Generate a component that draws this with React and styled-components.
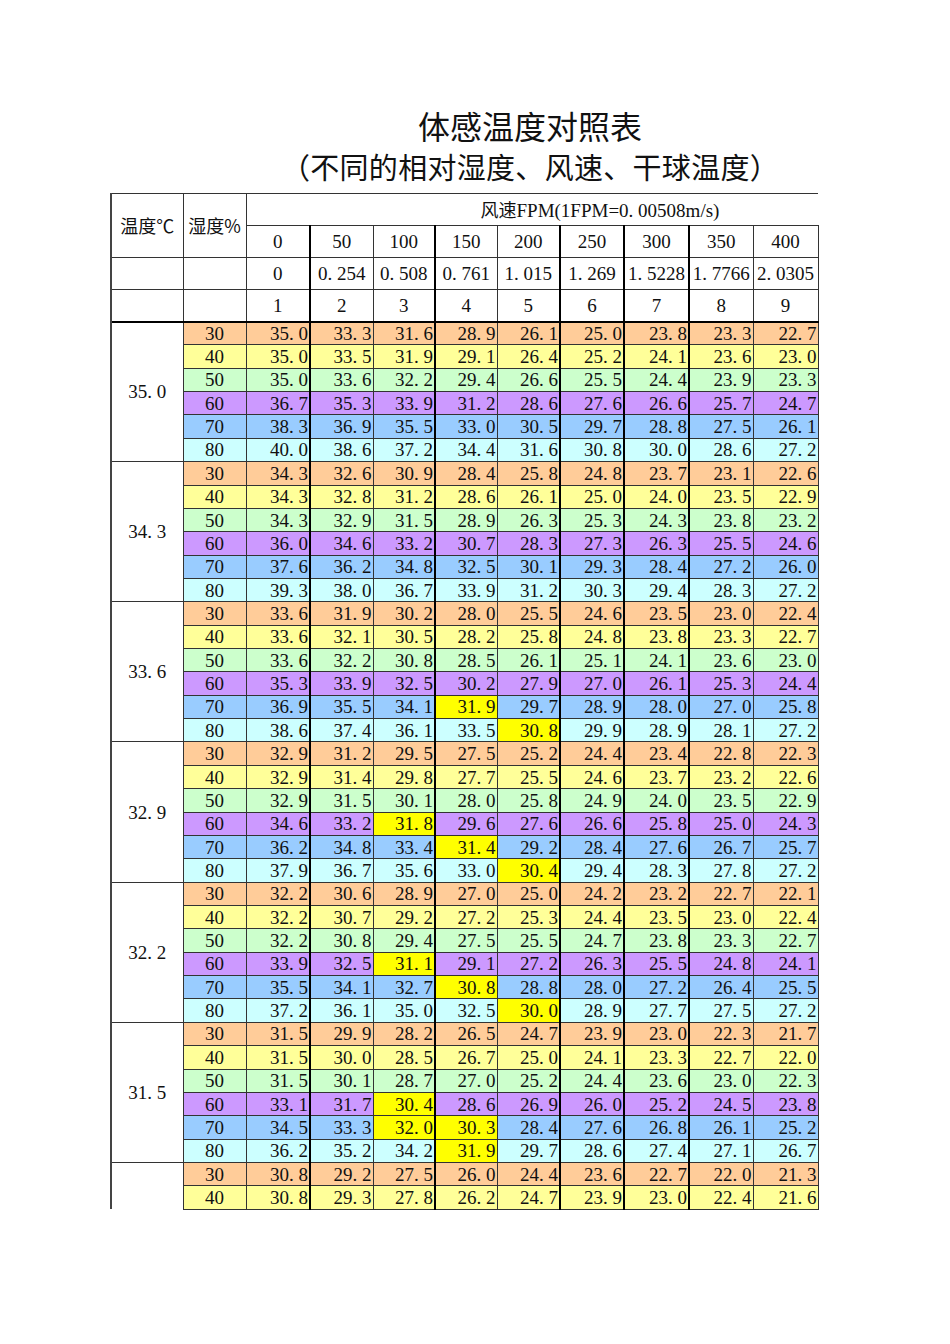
import React from "react";
import styled, { createGlobalStyle, css } from "styled-components";

const GlobalStyle = createGlobalStyle`
  html, body { margin: 0; padding: 0; background: #fff; }
  body { font-family: "Liberation Serif", "Noto Sans CJK SC", serif; color: #000; }
`;

const Page = styled.div`
  width: 950px;
  min-height: 1344px;
  box-sizing: border-box;
  padding: 105px 0 0 110px;
`;

const Heading = styled.header`
  display: flex;
  flex-direction: column;
  align-items: center;
  font-family: "Noto Sans CJK SC", sans-serif;
  color: #111;
`;

const Title = styled.h1`
  margin: 0;
  font-size: 32px;
  font-weight: 400;
  line-height: 41px;
`;

const Subtitle = styled.h2`
  margin: 0;
  font-size: 29px;
  font-weight: 400;
  line-height: 41px;
  letter-spacing: 0.3px;
`;

const Table = styled.table`
  margin-top: 6px;
  border-collapse: collapse;
  table-layout: fixed;
  width: 708px;
  font-family: "Liberation Serif", "Noto Sans CJK SC", serif;
  font-size: 19px;
  line-height: 1;
  color: #111;
`;

const HeadRow = styled.tr`
  height: 32px;
`;

const DataRow = styled.tr`
  height: 23.37px;
  background: ${(p) => p.$bg};
`;

const cellBorders = css`
  border: 1px solid #333;
  ${(p) => p.$thick && "border-right: 2px solid #000;"}
  ${(p) => p.$topThick && "border-top: 2px solid #000;"}
  ${(p) => p.$noRight && "border-right: none;"}
  ${(p) => p.$noBottom && "border-bottom: none;"}
  ${(p) => p.$edge && "border-left: 2px solid #444;"}
`;

const HeadCell = styled.th`
  ${cellBorders}
  font-weight: 400;
  padding: 0;
  text-align: ${(p) => p.$align || "center"};
  ${(p) => p.$indent && `padding-left: ${p.$indent}px;`}
  vertical-align: middle;
  white-space: nowrap;
  font-family: "Liberation Serif", "Noto Sans CJK SC", serif;
`;

const LabelText = styled.span`
  font-family: "Noto Sans CJK SC", sans-serif;
  font-size: 18px;
`;

const GroupCell = styled.td`
  ${cellBorders}
  border-left: 2px solid #444;
  padding: 0;
  text-align: center;
  vertical-align: middle;
  background: #fff;
`;

const HumidityCell = styled.td`
  ${cellBorders}
  padding: 0;
  text-align: center;
  vertical-align: middle;
`;

const ValueCell = styled.td`
  ${cellBorders}
  padding: 0 1px 0 0;
  text-align: right;
  vertical-align: middle;
  background: ${(p) => (p.$hot ? "#FFFF00" : "transparent")};
`;

const Dot = styled.span`
  display: inline-block;
  width: 0.5em;
  text-align: left;
`;

const Num = ({ v }) => {
  const s = String(v);
  const i = s.indexOf(".");
  if (i < 0) return <>{s}</>;
  return (
    <>
      {s.slice(0, i)}
      <Dot>.</Dot>
      {s.slice(i + 1)}
    </>
  );
};

const colWidths = [72, 63, 64, 63, 62, 62, 63, 64, 65, 64, 65];
// right border of data column index (0..8) drawn thick
const thickCols = new Set([0, 2, 4, 5, 6]);

const rowColors = {
  30: "#FFCC99",
  40: "#FFFF99",
  50: "#CCFFCC",
  60: "#CC99FF",
  70: "#99CCFF",
  80: "#CCFFFF",
};

const speeds = ["0", "50", "100", "150", "200", "250", "300", "350", "400"];
const metres = ["0", "0.254", "0.508", "0.761", "1.015", "1.269", "1.5228", "1.7766", "2.0305"];
const indices = ["1", "2", "3", "4", "5", "6", "7", "8", "9"];

const groups = [
  {
    t: "35.0",
    rows: [
      "35.0 33.3 31.6 28.9 26.1 25.0 23.8 23.3 22.7",
      "35.0 33.5 31.9 29.1 26.4 25.2 24.1 23.6 23.0",
      "35.0 33.6 32.2 29.4 26.6 25.5 24.4 23.9 23.3",
      "36.7 35.3 33.9 31.2 28.6 27.6 26.6 25.7 24.7",
      "38.3 36.9 35.5 33.0 30.5 29.7 28.8 27.5 26.1",
      "40.0 38.6 37.2 34.4 31.6 30.8 30.0 28.6 27.2",
    ],
  },
  {
    t: "34.3",
    rows: [
      "34.3 32.6 30.9 28.4 25.8 24.8 23.7 23.1 22.6",
      "34.3 32.8 31.2 28.6 26.1 25.0 24.0 23.5 22.9",
      "34.3 32.9 31.5 28.9 26.3 25.3 24.3 23.8 23.2",
      "36.0 34.6 33.2 30.7 28.3 27.3 26.3 25.5 24.6",
      "37.6 36.2 34.8 32.5 30.1 29.3 28.4 27.2 26.0",
      "39.3 38.0 36.7 33.9 31.2 30.3 29.4 28.3 27.2",
    ],
  },
  {
    t: "33.6",
    rows: [
      "33.6 31.9 30.2 28.0 25.5 24.6 23.5 23.0 22.4",
      "33.6 32.1 30.5 28.2 25.8 24.8 23.8 23.3 22.7",
      "33.6 32.2 30.8 28.5 26.1 25.1 24.1 23.6 23.0",
      "35.3 33.9 32.5 30.2 27.9 27.0 26.1 25.3 24.4",
      "36.9 35.5 34.1 31.9* 29.7 28.9 28.0 27.0 25.8",
      "38.6 37.4 36.1 33.5 30.8* 29.9 28.9 28.1 27.2",
    ],
  },
  {
    t: "32.9",
    rows: [
      "32.9 31.2 29.5 27.5 25.2 24.4 23.4 22.8 22.3",
      "32.9 31.4 29.8 27.7 25.5 24.6 23.7 23.2 22.6",
      "32.9 31.5 30.1 28.0 25.8 24.9 24.0 23.5 22.9",
      "34.6 33.2 31.8* 29.6 27.6 26.6 25.8 25.0 24.3",
      "36.2 34.8 33.4 31.4* 29.2 28.4 27.6 26.7 25.7",
      "37.9 36.7 35.6 33.0 30.4* 29.4 28.3 27.8 27.2",
    ],
  },
  {
    t: "32.2",
    rows: [
      "32.2 30.6 28.9 27.0 25.0 24.2 23.2 22.7 22.1",
      "32.2 30.7 29.2 27.2 25.3 24.4 23.5 23.0 22.4",
      "32.2 30.8 29.4 27.5 25.5 24.7 23.8 23.3 22.7",
      "33.9 32.5 31.1* 29.1 27.2 26.3 25.5 24.8 24.1",
      "35.5 34.1 32.7 30.8* 28.8 28.0 27.2 26.4 25.5",
      "37.2 36.1 35.0 32.5 30.0* 28.9 27.7 27.5 27.2",
    ],
  },
  {
    t: "31.5",
    rows: [
      "31.5 29.9 28.2 26.5 24.7 23.9 23.0 22.3 21.7",
      "31.5 30.0 28.5 26.7 25.0 24.1 23.3 22.7 22.0",
      "31.5 30.1 28.7 27.0 25.2 24.4 23.6 23.0 22.3",
      "33.1 31.7 30.4* 28.6 26.9 26.0 25.2 24.5 23.8",
      "34.5 33.3 32.0* 30.3* 28.4 27.6 26.8 26.1 25.2",
      "36.2 35.2 34.2 31.9* 29.7 28.6 27.4 27.1 26.7",
    ],
  },
  {
    t: "",
    partial: true,
    rows: [
      "30.8 29.2 27.5 26.0 24.4 23.6 22.7 22.0 21.3",
      "30.8 29.3 27.8 26.2 24.7 23.9 23.0 22.4 21.6",
    ],
  },
];

const humidities = [30, 40, 50, 60, 70, 80];

function DataGroup({ group, first }) {
  return group.rows.map((line, r) => {
    const h = humidities[r];
    const values = line.split(" ");
    return (
      <DataRow key={r} $bg={rowColors[h]}>
        {r === 0 && (
          <GroupCell
            rowSpan={group.rows.length}
            $topThick={first}
            $noBottom={group.partial}
          >
            <Num v={group.t} />
          </GroupCell>
        )}
        <HumidityCell $topThick={first && r === 0}>{h}</HumidityCell>
        {values.map((v, c) => {
          const hot = v.endsWith("*");
          return (
            <ValueCell
              key={c}
              $hot={hot}
              $thick={thickCols.has(c)}
              $topThick={first && r === 0}
            >
              <Num v={hot ? v.slice(0, -1) : v} />
            </ValueCell>
          );
        })}
      </DataRow>
    );
  });
}

export default function App() {
  return (
    <>
      <GlobalStyle />
      <Page>
        <Heading>
          <Title>体感温度对照表</Title>
          <Subtitle>（不同的相对湿度、风速、干球温度）</Subtitle>
        </Heading>
        <Table>
          <colgroup>
            {colWidths.map((w, i) => (
              <col key={i} style={{ width: w }} />
            ))}
          </colgroup>
          <thead>
            <HeadRow>
              <HeadCell rowSpan={2} $edge>
                <LabelText>温度℃</LabelText>
              </HeadCell>
              <HeadCell rowSpan={2}>
                <LabelText>湿度%</LabelText>
              </HeadCell>
              <HeadCell colSpan={9} $align="left" $indent={234} $noRight>
                <LabelText>风速</LabelText>FPM(1FPM=<Num v="0.00508" />m/s)
              </HeadCell>
            </HeadRow>
            <HeadRow>
              {speeds.map((s, i) => (
                <HeadCell key={i} $thick={thickCols.has(i)}>
                  {s}
                </HeadCell>
              ))}
            </HeadRow>
            <HeadRow>
              <HeadCell $edge />
              <HeadCell />
              {metres.map((s, i) => (
                <HeadCell key={i} $thick={thickCols.has(i)}>
                  <Num v={s} />
                </HeadCell>
              ))}
            </HeadRow>
            <HeadRow>
              <HeadCell $edge />
              <HeadCell />
              {indices.map((s, i) => (
                <HeadCell key={i} $thick={thickCols.has(i)}>
                  {s}
                </HeadCell>
              ))}
            </HeadRow>
          </thead>
          <tbody>
            {groups.map((g, gi) => (
              <DataGroup key={gi} group={g} first={gi === 0} />
            ))}
          </tbody>
        </Table>
      </Page>
    </>
  );
}
